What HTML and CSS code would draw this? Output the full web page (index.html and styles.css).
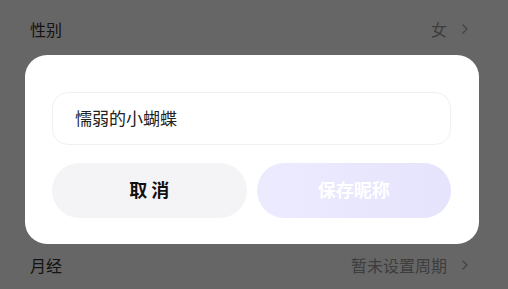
FILE: index.html
```html
<!DOCTYPE html>
<html lang="zh-CN">
<head>
<meta charset="utf-8">
<title>修改昵称</title>
<link rel="stylesheet" href="styles.css">
</head>
<body>
<div class="page">
  <ul class="list">
    <li class="row"><span class="label">性别</span><span class="value">女<svg class="chev" viewBox="0 0 6 10" width="6" height="10"><polyline points="1,1 5,5 1,9"/></svg></span></li>
    <li class="row"><span class="label">生日</span><span class="value">未设置<svg class="chev" viewBox="0 0 6 10" width="6" height="10"><polyline points="1,1 5,5 1,9"/></svg></span></li>
    <li class="row"><span class="label">身高</span><span class="value">未设置<svg class="chev" viewBox="0 0 6 10" width="6" height="10"><polyline points="1,1 5,5 1,9"/></svg></span></li>
    <li class="row"><span class="label">体重</span><span class="value">未设置<svg class="chev" viewBox="0 0 6 10" width="6" height="10"><polyline points="1,1 5,5 1,9"/></svg></span></li>
    <li class="row"><span class="label">月经</span><span class="value">暂未设置周期<svg class="chev" viewBox="0 0 6 10" width="6" height="10"><polyline points="1,1 5,5 1,9"/></svg></span></li>
  </ul>
</div>
<div class="mask">
  <div class="dialog">
    <div class="field">懦弱的小蝴蝶</div>
    <div class="actions">
      <button class="btn cancel">取 消</button>
      <button class="btn save">保存昵称</button>
    </div>
  </div>
</div>
</body>
</html>
```

FILE: styles.css
```css
* { box-sizing: border-box; }
html, body {
  margin: 0;
  padding: 0;
  width: 508px;
  height: 289px;
  overflow: hidden;
  background: #ffffff;
  font-family: "Noto Sans CJK SC", "Noto Sans", sans-serif;
}
.page { width: 100%; }
.list {
  list-style: none;
  margin: 0;
  padding: 0 40px 0 30px;
}
.row {
  height: 59px;
  display: flex;
  align-items: center;
  justify-content: space-between;
  font-size: 16px;
  padding-bottom: 1px;
}
.label { color: #333333; }
.value {
  display: flex;
  align-items: center;
  gap: 15px;
  color: #999999;
}
.chev {
  fill: none;
  stroke: #a8a8a8;
  stroke-width: 1.3;
  stroke-linecap: round;
  stroke-linejoin: round;
}
.mask {
  position: fixed;
  inset: 0;
  background: rgba(0, 0, 0, 0.6);
}
.dialog {
  position: absolute;
  left: 25px;
  top: 55px;
  width: 454px;
  background: #ffffff;
  border-radius: 22px;
  padding: 37px 28px 26px 27px;
  display: flex;
  flex-direction: column;
  gap: 18px;
}
.field {
  height: 53px;
  border: 1px solid #f0f0f2;
  border-radius: 16px;
  display: flex;
  align-items: center;
  padding: 0 0 3px 22px;
  font-size: 17px;
  color: #222222;
}
.actions {
  display: flex;
  gap: 10px;
}
.btn {
  flex: 1;
  height: 55px;
  border: none;
  border-radius: 28px;
  font-family: "Noto Sans CJK SC", "Noto Sans", sans-serif;
  font-size: 18px;
  font-weight: 700;
  padding: 0 0 4px 0;
}
.cancel {
  background: #f4f4f6;
  color: #111111;
}
.save {
  background: linear-gradient(90deg, #ecebfe, #e6e3fd);
  color: #ffffff;
}
```
